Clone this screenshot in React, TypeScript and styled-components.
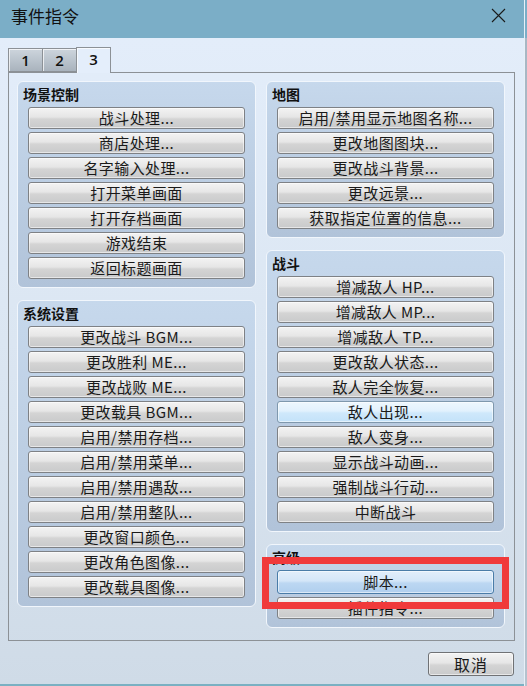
import styled, { createGlobalStyle } from "styled-components";

const GlobalStyle = createGlobalStyle`
  html, body {
    margin: 0;
    padding: 0;
    background: #a9b8c5;
  }
  body {
    font-family: "Noto Sans CJK SC", "Noto Sans", "Liberation Sans", sans-serif;
    color: #151515;
  }
`;

type ButtonState = "normal" | "hover" | "focus";

interface Command {
  label: string;
  state?: ButtonState;
}

interface Group {
  title: string;
  commands: Command[];
  highlighted?: boolean;
}

const leftGroups: Group[] = [
  {
    title: "场景控制",
    commands: [
      { label: "战斗处理..." },
      { label: "商店处理..." },
      { label: "名字输入处理..." },
      { label: "打开菜单画面" },
      { label: "打开存档画面" },
      { label: "游戏结束" },
      { label: "返回标题画面" },
    ],
  },
  {
    title: "系统设置",
    commands: [
      { label: "更改战斗 BGM..." },
      { label: "更改胜利 ME..." },
      { label: "更改战败 ME..." },
      { label: "更改载具 BGM..." },
      { label: "启用/禁用存档..." },
      { label: "启用/禁用菜单..." },
      { label: "启用/禁用遇敌..." },
      { label: "启用/禁用整队..." },
      { label: "更改窗口颜色..." },
      { label: "更改角色图像..." },
      { label: "更改载具图像..." },
    ],
  },
];

const rightGroups: Group[] = [
  {
    title: "地图",
    commands: [
      { label: "启用/禁用显示地图名称..." },
      { label: "更改地图图块..." },
      { label: "更改战斗背景..." },
      { label: "更改远景..." },
      { label: "获取指定位置的信息..." },
    ],
  },
  {
    title: "战斗",
    commands: [
      { label: "增减敌人 HP..." },
      { label: "增减敌人 MP..." },
      { label: "增减敌人 TP..." },
      { label: "更改敌人状态..." },
      { label: "敌人完全恢复..." },
      { label: "敌人出现...", state: "hover" },
      { label: "敌人变身..." },
      { label: "显示战斗动画..." },
      { label: "强制战斗行动..." },
      { label: "中断战斗" },
    ],
  },
  {
    title: "高级",
    highlighted: true,
    commands: [{ label: "脚本...", state: "focus" }, { label: "插件指令..." }],
  },
];

const Screen = styled.div`
  width: 527px;
  height: 686px;
  display: flex;
  overflow: hidden;
`;

const Window = styled.div`
  width: 524px;
  height: 686px;
  display: flex;
  flex-direction: column;
  background: linear-gradient(to bottom, #e4eefb 0%, #dbe6f2 50%, #cfdbe7 100%);
  border-bottom: 2px solid #7ab0c2;
  box-sizing: border-box;
`;

const TitleBar = styled.div`
  height: 38px;
  flex-shrink: 0;
  background: #7baec7;
  display: flex;
  justify-content: space-between;
  align-items: flex-start;
  padding: 4px 18px 0 11px;
  box-sizing: border-box;
`;

const Title = styled.div`
  font-size: 17px;
  line-height: 24px;
  color: #111;
`;

const CloseIcon = styled.svg`
  margin-top: 4px;
`;

const Body = styled.div`
  flex: 1;
  display: flex;
  flex-direction: column;
  padding: 9px 9px 0 8px;
`;

const TabRow = styled.div`
  height: 25px;
  display: flex;
  align-items: flex-end;
`;

const Tab = styled.div<{ $active?: boolean }>`
  width: 35px;
  height: ${(p) => (p.$active ? "26px" : "24px")};
  margin-bottom: ${(p) => (p.$active ? "-1px" : "0")};
  position: relative;
  z-index: ${(p) => (p.$active ? 1 : 0)};
  box-sizing: border-box;
  border: 1px solid #8c9196;
  border-bottom: ${(p) => (p.$active ? "none" : "1px solid #8c9196")};
  margin-right: -1px;
  background: ${(p) =>
    p.$active ? "#e4eefb" : "linear-gradient(to bottom, #cdd5dd, #a9b3bd)"};
  box-shadow: inset 1px 1px 0 rgba(255, 255, 255, 0.7);
  display: flex;
  align-items: center;
  justify-content: center;
  font-family: "Open Sans", "Noto Sans", sans-serif;
  font-size: 15px;
  font-weight: 600;
  color: #111;
  padding-bottom: ${(p) => (p.$active ? "3px" : "0")};
`;

const TabPanel = styled.div`
  height: 569px;
  box-sizing: border-box;
  border: 1px solid #8c9196;
  padding: 8px 9px 0 8px;
  display: grid;
  grid-template-columns: 1fr 1fr;
  column-gap: 10px;
  align-items: start;
`;

const Column = styled.div`
  display: flex;
  flex-direction: column;
  gap: 12px;
`;

const GroupBox = styled.div`
  position: relative;
  border: 1px solid #f1f6fc;
  border-radius: 6px;
  background: linear-gradient(to bottom, #c6d8ec, #b1c3d9);
  padding: 0 10px 8px 10px;
  display: flex;
  flex-direction: column;
  gap: 3px;
`;

const GroupTitle = styled.div`
  font-size: 14px;
  font-weight: 700;
  line-height: 19px;
  padding: 3px 0 0 0;
  margin-left: -5px;
  color: #111;
`;

const stateBg: Record<ButtonState, string> = {
  normal: "linear-gradient(to bottom, #f3f3f3 0%, #e6e6e6 45%, #d4d4d4 55%, #c9cacb 100%)",
  hover: "linear-gradient(to bottom, #eef7fe 0%, #e2f1fd 45%, #cfe8fb 55%, #c3e2f9 100%)",
  focus: "linear-gradient(to bottom, #e2eefb 0%, #d4e6f8 45%, #bcd7f2 55%, #b0cfee 100%)",
};

const CommandButton = styled.div<{ $state: ButtonState }>`
  height: ${(p) => (p.$state === "focus" ? "24px" : "22px")};
  box-sizing: border-box;
  border: 1px solid ${(p) => (p.$state === "focus" ? "#4a7ca8" : p.$state === "hover" ? "#7f98ad" : "#7e8185")};
  border-radius: 3px;
  background: ${(p) => stateBg[p.$state]};
  box-shadow: inset 0 0 0 1px rgba(255, 255, 255, 0.55);
  display: flex;
  align-items: center;
  justify-content: center;
  font-size: 15px;
  line-height: 20px;
  letter-spacing: 0.4px;
  color: #1a1a1a;
  white-space: nowrap;
`;

const Highlight = styled.div`
  position: absolute;
  left: -5px;
  top: 12px;
  width: 247px;
  height: 52px;
  box-sizing: border-box;
  border: 7px solid #f03a3b;
  pointer-events: none;
`;

const Footer = styled.div`
  display: flex;
  justify-content: flex-end;
  padding: 11px 1px 0 0;
`;

const CancelButton = styled.div`
  width: 86px;
  height: 24px;
  box-sizing: border-box;
  border: 1px solid #707275;
  border-radius: 3px;
  background: ${stateBg.normal};
  box-shadow: inset 0 0 0 1px rgba(255, 255, 255, 0.55);
  display: flex;
  align-items: center;
  justify-content: center;
  font-size: 16px;
  letter-spacing: 1px;
  color: #1a1a1a;
`;

const Strip = styled.div`
  flex: 1;
  border-left: 1px solid #e8f0f8;
  background: linear-gradient(to bottom, #7baec7 0px, #7baec7 38px, #a7b7c4 38px, #b4c2ce 100%);
`;

function GroupPanel({ group }: { group: Group }) {
  return (
    <GroupBox>
      <GroupTitle>{group.title}</GroupTitle>
      {group.commands.map((c) => (
        <CommandButton key={c.label} $state={c.state ?? "normal"}>
          {c.label}
        </CommandButton>
      ))}
      {group.highlighted && <Highlight />}
    </GroupBox>
  );
}

export default function App() {
  return (
    <Screen>
      <GlobalStyle />
      <Window>
        <TitleBar>
          <Title>事件指令</Title>
          <CloseIcon width="15" height="15" viewBox="0 0 15 15">
            <path d="M1 1 L14 14 M14 1 L1 14" stroke="#1a1a1a" strokeWidth="1.1" fill="none" />
          </CloseIcon>
        </TitleBar>
        <Body>
          <TabRow>
            <Tab>1</Tab>
            <Tab>2</Tab>
            <Tab $active>3</Tab>
          </TabRow>
          <TabPanel>
            <Column>
              {leftGroups.map((g) => (
                <GroupPanel key={g.title} group={g} />
              ))}
            </Column>
            <Column>
              {rightGroups.map((g) => (
                <GroupPanel key={g.title} group={g} />
              ))}
            </Column>
          </TabPanel>
          <Footer>
            <CancelButton>取消</CancelButton>
          </Footer>
        </Body>
      </Window>
      <Strip />
    </Screen>
  );
}
